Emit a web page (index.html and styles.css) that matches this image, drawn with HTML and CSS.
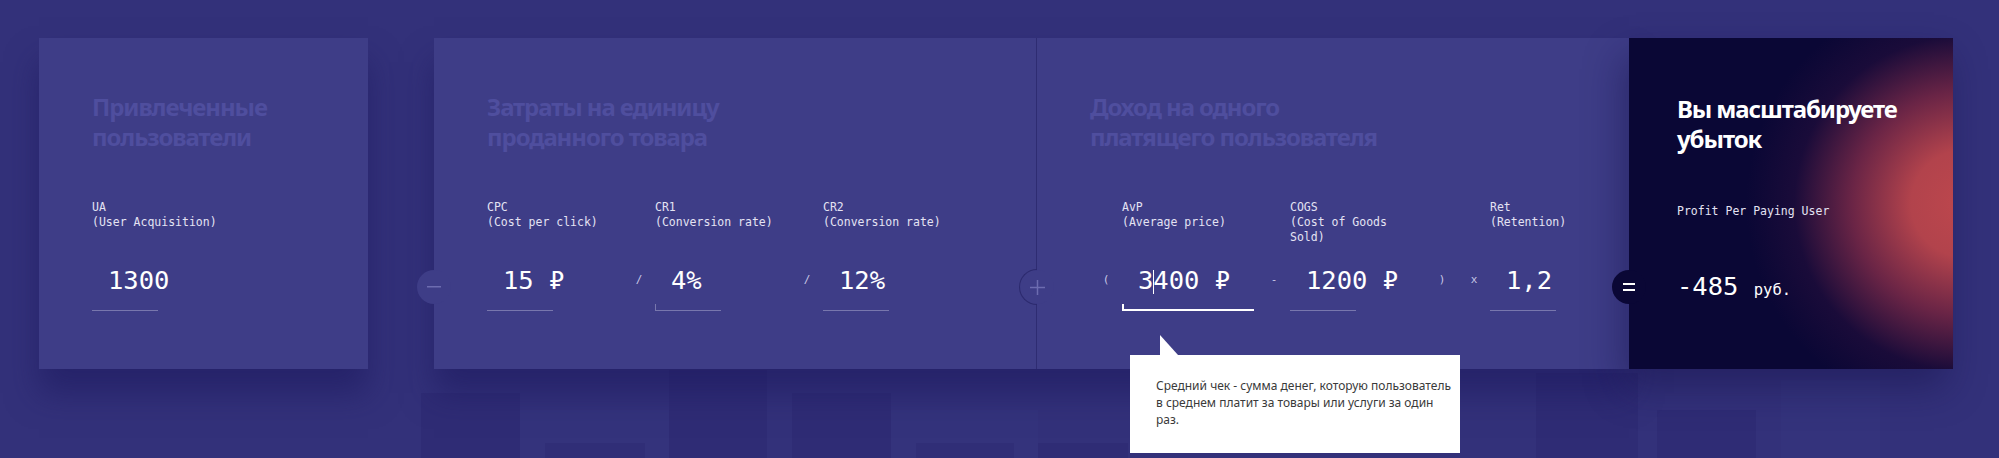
FILE: index.html
```html
<!DOCTYPE html>
<html lang="ru">
<head>
<meta charset="utf-8">
<title>Unit economics</title>
<link rel="stylesheet" href="styles.css">
</head>
<body>
<main class="board">
  <section class="row">
    <div class="card card-ua">
      <h2 class="title">Привлеченные<br>пользователи</h2>
      <div class="fields">
        <div class="field">
          <div class="label">UA<br>(User Acquisition)</div>
          <div class="value">1300</div>
          <div class="line"></div>
        </div>
      </div>
    </div>

    <div class="panel">
      <div class="card card-cost">
        <span class="joint joint-minus"><svg width="14" height="2" viewBox="0 0 14 2"><rect x="0" y="0" width="14" height="1.5" fill="#6d6cb0"/></svg></span>
        <h2 class="title">Затраты на единицу<br>проданного товара</h2>
        <div class="fields">
          <div class="field">
            <div class="label">CPC<br>(Cost per click)</div>
            <div class="value">15 ₽</div>
            <div class="line"></div>
          </div>
          <div class="op">/</div>
          <div class="field">
            <div class="label">CR1<br>(Conversion rate)</div>
            <div class="value">4%</div>
            <div class="line line-tick"></div>
          </div>
          <div class="op">/</div>
          <div class="field">
            <div class="label">CR2<br>(Conversion rate)</div>
            <div class="value">12%</div>
            <div class="line"></div>
          </div>
        </div>
      </div>

      <div class="card card-income">
        <span class="joint joint-plus"><svg width="15" height="15" viewBox="0 0 15 15"><rect x="0" y="6.75" width="15" height="1.5" fill="#6d6cb0"/><rect x="6.75" y="0" width="1.5" height="15" fill="#6d6cb0"/></svg></span>
        <h2 class="title">Доход на одного<br>платящего пользователя</h2>
        <div class="fields">
          <div class="op">(</div>
          <div class="field">
            <div class="label">AvP<br>(Average price)</div>
            <div class="value">3<span class="caret"></span>400 ₽</div>
            <div class="line line-active"></div>
            <div class="tooltip">Средний чек - сумма денег, которую пользователь<br>в среднем платит за товары или услуги за один<br>раз.</div>
          </div>
          <div class="op">-</div>
          <div class="field">
            <div class="label">COGS<br>(Cost of Goods Sold)</div>
            <div class="value">1200 ₽</div>
            <div class="line"></div>
          </div>
          <div class="op">)</div>
          <div class="op">x</div>
          <div class="field">
            <div class="label">Ret<br>(Retention)</div>
            <div class="value">1,2</div>
            <div class="line"></div>
          </div>
        </div>
      </div>
    </div>

    <div class="card card-result">
      <span class="joint joint-eq"><svg width="12" height="8" viewBox="0 0 12 8"><rect x="0" y="0" width="12" height="2" fill="#ffffff"/><rect x="0" y="6" width="12" height="2" fill="#ffffff"/></svg></span>
      <h2 class="title">Вы масштабируете<br>убыток</h2>
      <div class="result-label">Profit Per Paying User</div>
      <div class="result-value">-485 <span class="unit">руб.</span></div>
    </div>
  </section>

  <div class="ghosts">
    <div class="ghost dark g1"></div>
    <div class="ghost light g2"><div class="ghost dark inner"></div></div>
    <div class="ghost dark g3"></div>
    <div class="ghost dark g4"></div>
    <div class="ghost light g5"><div class="ghost dark inner inner-b"></div></div>
    <div class="ghost dark g6"></div>
    <div class="ghost dark g7"></div>
    <div class="ghost dark g8"></div>
    <div class="ghost light g9"></div>
  </div>
</main>
</body>
</html>
```

FILE: styles.css
```css
html, body {
  margin: 0;
  padding: 0;
}

body {
  width: 1999px;
  height: 458px;
  overflow: hidden;
  background: #33317a;
  font-family: "DejaVu Sans Mono", "Liberation Mono", monospace;
}

.board {
  display: flex;
  flex-direction: column;
}

.row {
  display: flex;
  align-items: flex-start;
  padding: 38px 0 0 39px;
  position: relative;
  z-index: 1;
}

.card {
  position: relative;
  box-sizing: border-box;
  height: 331px;
  background: #3e3d87;
  padding: 54px 0 0 53px;
  flex: none;
}

.card-ua {
  width: 329px;
  box-shadow: 0 24px 30px rgba(28, 24, 92, 0.55);
}

.panel {
  display: flex;
  margin-left: 66px;
  box-shadow: 0 24px 30px rgba(28, 24, 92, 0.55);
}

.card-cost {
  width: 602px;
}

.card-income {
  width: 593px;
  border-left: 1px solid #2e2c72;
}

.card-result {
  width: 324px;
  padding: 56px 0 0 48px;
  background:
    radial-gradient(ellipse 220px 215px at 104% 50%,
      #bd474d 0%,
      #b2434c 25%,
      rgba(130, 44, 74, 0.8) 52%,
      rgba(50, 18, 64, 0.4) 78%,
      rgba(10, 7, 53, 0) 100%),
    #0a0735;
  box-shadow: -6px 18px 36px rgba(20, 15, 70, 0.45);
  color: #fff;
}

.title {
  margin: 0;
  font-family: "Noto Sans", "Open Sans", sans-serif;
  font-weight: 700;
  font-size: 24px;
  line-height: 30px;
  letter-spacing: -1.1px;
  color: #4f4e9e;
}

.card-result .title {
  color: #ffffff;
}

.fields {
  display: flex;
  margin-top: 48px;
}

.field {
  position: relative;
  width: 136px;
  flex: none;
}

.label {
  height: 45px;
  font-size: 11.5px;
  line-height: 15px;
  color: #e4e3f3;
}

.value {
  margin-top: 15px;
  padding-left: 16px;
  height: 40px;
  font-size: 25.5px;
  line-height: 40px;
  color: #ffffff;
  white-space: nowrap;
}

.caret {
  display: inline-block;
  width: 1px;
  height: 24px;
  margin-right: -1px;
  background: #ffffff;
  vertical-align: -5px;
}

.line {
  position: relative;
  margin-top: 10px;
  width: 66px;
  height: 1px;
  background: #7877ad;
}

.line-tick::before {
  content: "";
  position: absolute;
  left: 0;
  bottom: 0;
  width: 1px;
  height: 7px;
  background: #7877ad;
}

.line-active {
  margin-top: 9px;
  width: 132px;
  height: 2px;
  background: #ffffff;
}

.line-active::before {
  content: "";
  position: absolute;
  left: 0;
  bottom: 0;
  width: 2px;
  height: 7px;
  background: #ffffff;
}

.op {
  width: 32px;
  flex: none;
  padding-top: 60px;
  height: 40px;
  line-height: 40px;
  text-align: center;
  font-size: 11px;
  color: #c9c8e6;
}

.joint {
  position: absolute;
  left: -17px;
  top: 232px;
  width: 34px;
  height: 34px;
  border-radius: 50%;
  display: flex;
  align-items: center;
  justify-content: center;
  z-index: 2;
}

.joint svg {
  display: block;
}

.joint-minus,
.joint-plus {
  background: #3e3d87;
}

.joint-plus::before {
  content: "";
  position: absolute;
  left: -1px;
  top: -1px;
  width: 18px;
  height: 36px;
  box-sizing: border-box;
  border: 1px solid #2c2a6e;
  border-right: 0;
  border-radius: 18px 0 0 18px;
}

.joint-eq {
  background: #0a0735;
}

.result-label {
  margin-top: 50px;
  font-size: 11.5px;
  line-height: 15px;
  color: #e4e3f3;
}

.result-value {
  margin-top: 47px;
  font-size: 25.5px;
  line-height: 40px;
  color: #ffffff;
  white-space: nowrap;
}

.unit {
  font-size: 15.5px;
}

.tooltip {
  position: absolute;
  left: 8px;
  top: 155px;
  z-index: 5;
  box-sizing: border-box;
  width: 330px;
  height: 98px;
  padding: 22px 0 0 26px;
  background: #ffffff;
  font-family: "Noto Sans", "Open Sans", sans-serif;
  font-size: 12px;
  line-height: 17px;
  color: #3a3a3a;
  white-space: nowrap;
}

.tooltip::before {
  content: "";
  position: absolute;
  left: 30px;
  top: -20px;
  width: 0;
  height: 0;
  border-bottom: 20px solid #ffffff;
  border-right: 18px solid transparent;
}

.ghosts {
  display: flex;
  align-items: stretch;
  height: 89px;
  overflow: hidden;
}

.ghost {
  flex: none;
  display: flex;
}

.ghost.dark {
  background: rgba(22, 18, 82, 0.13);
}

.ghost.light {
  background: rgba(72, 70, 150, 0.1);
}

.g1 { margin-left: 421px; width: 99px; margin-top: 24px; }
.g2 { width: 149px; margin-top: 41px; }
.g3 { width: 98px; margin-top: 1px; }
.g4 { margin-left: 25px; width: 99px; margin-top: 24px; }
.g5 { width: 147px; margin-top: 41px; }
.g6 { width: 90px; margin-top: 74px; }
.g7 { margin-left: 408px; width: 102px; margin-top: 4px; }
.g8 { margin-left: 19px; width: 99px; margin-top: 41px; }
.g9 { margin-left: 25px; width: 99px; margin-top: 11px; }

.inner {
  margin-left: 25px;
  margin-top: 33px;
  width: 100px;
}

.inner-b {
  width: 98px;
}
```
